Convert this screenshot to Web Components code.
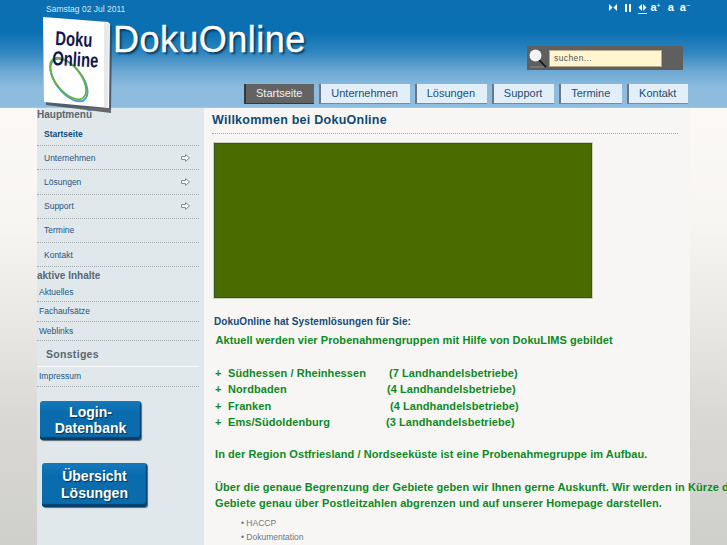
<!DOCTYPE html>
<html lang="de">
<head>
<meta charset="utf-8">
<title>DokuOnline</title>
<style>
html { overflow: hidden; height: 100%; }
body {
    margin: 0;
    height: 545px;
    overflow: hidden;
    font-family: "Liberation Sans", Arial, sans-serif;
    background: linear-gradient(#fbf8f5 108px, #f8f6f3 220px, #e9e8e4 320px, #d9d8d4 420px, #cfcfcb 545px);
}
</style>
</head>
<body>
<doku-header date="Samstag 02 Jul 2011" brand="DokuOnline">
    <doku-tab active>Startseite</doku-tab>
    <doku-tab>Unternehmen</doku-tab>
    <doku-tab>Lösungen</doku-tab>
    <doku-tab>Support</doku-tab>
    <doku-tab>Termine</doku-tab>
    <doku-tab>Kontakt</doku-tab>
</doku-header>
<doku-page>
    <doku-sidebar slot="side">
        <side-title>Hauptmenü</side-title>
        <side-item size="big" current>Startseite</side-item>
        <side-item size="big" more>Unternehmen</side-item>
        <side-item size="big" more>Lösungen</side-item>
        <side-item size="big" more>Support</side-item>
        <side-item size="big">Termine</side-item>
        <side-item size="big">Kontakt</side-item>
        <side-title second>aktive Inhalte</side-title>
        <side-item>Aktuelles</side-item>
        <side-item>Fachaufsätze</side-item>
        <side-item>Weblinks</side-item>
        <side-title sub>Sonstiges</side-title>
        <side-item>Impressum</side-item>
        <doku-button style="margin: 14px 0 0 3px; width: 101px; height: 39px;">Login-<br>Datenbank</doku-button>
        <doku-button style="margin: 23px 0 0 5px; width: 105px; height: 44px;">Übersicht<br>Lösungen</doku-button>
    </doku-sidebar>
    <doku-content title="Willkommen bei DokuOnline">
        <p class="intro">DokuOnline hat Systemlösungen für Sie:</p>
        <p class="lead">Aktuell werden vier Probenahmengruppen mit Hilfe von DokuLIMS gebildet</p>
        <div class="regions">
            <region-row name="Südhessen / Rheinhessen" gap="161">(7 Landhandelsbetriebe)</region-row>
            <region-row name="Nordbaden" gap="159">(4 Landhandelsbetriebe)</region-row>
            <region-row name="Franken" gap="162">(4 Landhandelsbetriebe)</region-row>
            <region-row name="Ems/Südoldenburg" gap="158">(3 Landhandelsbetriebe)</region-row>
        </div>
        <p class="para">In der Region Ostfriesland / Nordseeküste ist eine Probenahmegruppe im Aufbau.</p>
        <p class="para wide">Über die genaue Begrenzung der Gebiete geben wir Ihnen gerne Auskunft. Wir werden in Kürze die<br>Gebiete genau über Postleitzahlen abgrenzen und auf unserer Homepage darstellen.</p>
        <ul>
            <li>HACCP</li>
            <li>Dokumentation</li>
        </ul>
    </doku-content>
</doku-page>

<script>
// Kopfbereich mit Logo, Suche und Reitern
class DokuHeader extends HTMLElement {
    constructor() {
        super();
        this.attachShadow({ mode: "open" });
        this.shadowRoot.innerHTML = `
            <style>
                :host {
                    display: block;
                    position: relative;
                    height: 108px;
                    box-sizing: border-box;
                    padding: 3px 37px 0 46px;
                    background: linear-gradient(#0c6fb1 0, #0a70b2 32px, #2f85bf 52px, #6fa9d3 72px, #8dbcde 88px, #8dbcde 107px, #a9c9c8 107px);
                    color: #fff;
                }
                .top { display: flex; justify-content: space-between; height: 23px; }
                .date { font-size: 8.5px; color: #d5e6f3; line-height: 11px; padding-top: 1px; }
                .brandrow { display: flex; justify-content: space-between; align-items: flex-start; padding-left: 67px; }
                .brand {
                    font-size: 36px;
                    line-height: 28px;
                    text-shadow: 2px 2px 2px #053a5e;
                    letter-spacing: 0.45px;
                    height: 28px;
                    -webkit-text-stroke: 0.3px #fff;
                }
                doku-search { margin: 20px 7px 0 0; width: 156px; }
                nav { display: flex; gap: 5px; position: absolute; left: 244px; top: 84px; }
                svg.logo { position: absolute; left: 38px; top: 12px; }
            </style>
            <svg class="logo" width="78" height="102" viewBox="0 0 78 102">
                <polygon points="6,6 73,12 72,99 7,91" fill="#3a3f44" opacity=".75" transform="translate(1 2)"/>
                <polygon points="5,5 70,10 72,12 71,96 6,90" fill="#fff"/>
                <polygon points="66,10 71,12 70,96 66,95" fill="#e6e9eb"/>
                <ellipse cx="31" cy="68" rx="13" ry="25" transform="rotate(-38 31 68)" fill="none" stroke="#4a9bd8" stroke-width="2"/>
                <ellipse cx="30" cy="66.5" rx="12.5" ry="24.5" transform="rotate(-38 30 66.5)" fill="none" stroke="#66b32e" stroke-width="1.6"/>
                <text x="17" y="33" font-family="Liberation Sans" font-weight="700" font-size="20" fill="#12164e" transform="rotate(3 17 33)" textLength="37" lengthAdjust="spacingAndGlyphs">Doku</text>
                <text x="14" y="53" font-family="Liberation Sans" font-weight="700" font-size="20" fill="#12164e" transform="rotate(3 14 53)" textLength="46" lengthAdjust="spacingAndGlyphs">Online</text>
            </svg>
            <div class="top">
                <span class="date"></span>
                <doku-tools></doku-tools>
            </div>
            <div class="brandrow">
                <span class="brand"></span>
                <doku-search></doku-search>
            </div>
            <nav><slot></slot></nav>
        `;
    }

    connectedCallback() {
        this.shadowRoot.querySelector(".date").textContent = this.getAttribute("date");
        this.shadowRoot.querySelector(".brand").textContent = this.getAttribute("brand");
    }
}

// Symbole oben rechts (Layout und Schriftgroesse)
class DokuTools extends HTMLElement {
    constructor() {
        super();
        this.attachShadow({ mode: "open" });
        this.shadowRoot.innerHTML = `
            <style>
                :host { display: flex; align-items: flex-start; color: #fff; font: 700 11px "Liberation Sans", sans-serif; }
                svg { display: block; margin-top: 1px; }
                span { line-height: 9px; display: block; }
                sup { font-size: 7px; line-height: 0; vertical-align: 3px; font-weight: 400; }
            </style>
            <svg width="8" height="7" viewBox="0 0 8 7" fill="#fff"><polygon points="0,0 3.5,3.5 0,7"/><polygon points="8,0 4.5,3.5 8,7"/></svg>
            <svg width="6" height="8" viewBox="0 0 6 8" fill="#fff" style="margin-left:8px"><rect width="2" height="8"/><rect x="4" width="2" height="8"/></svg>
            <svg width="9" height="10" viewBox="0 0 9 10" fill="#fff" style="margin-left:7px"><polygon points="4,0 0.5,3.5 4,7"/><polygon points="5,0 8.5,3.5 5,7"/><rect y="9" width="9" height="1"/></svg>
            <span style="margin-left:3px">a<sup>+</sup></span>
            <span style="margin-left:7px">a</span>
            <span style="margin-left:6px">a<sup>−</sup></span>
        `;
    }
}

// Suchfeld mit Lupe
class DokuSearch extends HTMLElement {
    constructor() {
        super();
        this.attachShadow({ mode: "open" });
        this.shadowRoot.innerHTML = `
            <style>
                :host {
                    display: flex;
                    align-items: center;
                    gap: 2px;
                    height: 24px;
                    box-sizing: border-box;
                    padding: 0 21px 0 2px;
                    background: #5f5f5f;
                }
                .field {
                    flex: 1;
                    height: 17px;
                    box-sizing: border-box;
                    border: 1px solid #b3ab8c;
                    background: #fff6cf;
                    color: #555;
                    font-size: 8.5px;
                    line-height: 15px;
                    letter-spacing: 0.4px;
                    padding-left: 4px;
                }
            </style>
            <svg width="18" height="20" viewBox="0 0 18 20">
                <line x1="10" y1="12" x2="17" y2="19" stroke="#111" stroke-width="1.6"/>
                <line x1="1" y1="19" x2="15" y2="19" stroke="#8a8a8a" stroke-width="1"/>
                <circle cx="6.5" cy="7.5" r="6" fill="#f2f2f2"/>
            </svg>
            <div class="field">suchen...</div>
        `;
    }
}

// Reiter der Hauptnavigation
class DokuTab extends HTMLElement {
    constructor() {
        super();
        this.attachShadow({ mode: "open" });
        this.shadowRoot.innerHTML = `
            <style>
                :host {
                    display: block;
                    height: 20px;
                    box-sizing: border-box;
                    padding: 0 11.8px 0 10px;
                    background: #e2eff8;
                    border-left: 2px solid #6b7680;
                    border-bottom: 1px solid #7c8a96;
                    color: #1b4d74;
                    font-size: 11px;
                    line-height: 18px;
                }
                :host([active]) {
                    background: #636363;
                    color: #f2f2f2;
                    border-left-color: #2c3a46;
                    border-bottom-color: #2c3a46;
                }
            </style>
            <slot></slot>
        `;
    }
}

// Seitenkoerper: Seitenleiste und Inhalt
class DokuPage extends HTMLElement {
    constructor() {
        super();
        this.attachShadow({ mode: "open" });
        this.shadowRoot.innerHTML = `
            <style>
                :host {
                    display: grid;
                    grid-template-columns: 167px 486px;
                    margin-left: 37px;
                    height: 437px;
                }
            </style>
            <slot name="side"></slot>
            <slot></slot>
        `;
    }
}

class DokuSidebar extends HTMLElement {
    constructor() {
        super();
        this.attachShadow({ mode: "open" });
        this.shadowRoot.innerHTML = `
            <style>
                :host { display: block; background: #e1e8ec; height: 437px; padding-right: 5px; box-sizing: border-box; }
            </style>
            <slot></slot>
        `;
    }
}

class SideTitle extends HTMLElement {
    constructor() {
        super();
        this.attachShadow({ mode: "open" });
        this.shadowRoot.innerHTML = `
            <style>
                :host {
                    display: block;
                    height: 14px;
                    color: #596773;
                    font-size: 10px;
                    font-weight: 700;
                    line-height: 14px;
                }
                :host([second]) { height: 15.5px; line-height: 17px; }
                :host([sub]) {
                    height: 26px;
                    line-height: 26px;
                    padding-left: 9px;
                    font-size: 10.5px;
                    letter-spacing: 0.3px;
                    box-sizing: border-box;
                    border-bottom: 1px solid #f8fafb;
                }
            </style>
            <slot></slot>
        `;
    }
}

class SideItem extends HTMLElement {
    constructor() {
        super();
        this.attachShadow({ mode: "open" });
        this.shadowRoot.innerHTML = `
            <style>
                :host {
                    display: flex;
                    justify-content: space-between;
                    align-items: center;
                    height: 19.5px;
                    box-sizing: border-box;
                    padding: 0 9px 0 2px;
                    border-bottom: 1px dotted #a5acb0;
                    color: #1f5580;
                    font-size: 8.5px;
                }
                :host([size="big"]) { height: 24.2px; padding-left: 7px; }
                :host([current]) { font-weight: 700; color: #0f4a76; }
                svg { display: none; }
                :host([more]) svg { display: block; }
            </style>
            <span><slot></slot></span>
            <svg width="9" height="8" viewBox="0 0 9 8">
                <path d="M0.5 2.5H4.5V0.5L8.5 4L4.5 7.5V5.5H0.5Z" fill="#f4f6f7" stroke="#8a9096" stroke-width="1"/>
            </svg>
        `;
    }
}

class DokuButton extends HTMLElement {
    constructor() {
        super();
        this.attachShadow({ mode: "open" });
        this.shadowRoot.innerHTML = `
            <style>
                :host {
                    display: flex;
                    align-items: center;
                    justify-content: center;
                    box-sizing: border-box;
                    text-align: center;
                    background: linear-gradient(#1478bb, #0a6cad 30%);
                    border-radius: 3px;
                    box-shadow: inset -1px -3px 1px #06406a, 1px 1px 1px #5a6770;
                    color: #fff;
                    font-size: 14px;
                    font-weight: 700;
                    line-height: 16.5px;
                    text-shadow: 1px 1px 1px #043353;
                }
            </style>
            <span><slot></slot></span>
        `;
    }
}

// Eine Zeile der Gebietsliste, Spalte fuer die Anzahl per Attribut
class RegionRow extends HTMLElement {
    constructor() {
        super();
        this.attachShadow({ mode: "open" });
        this.shadowRoot.innerHTML = `
            <style>
                :host { display: flex; white-space: nowrap; }
                .plus { width: 13px; }
            </style>
            <span class="plus">+</span>
            <span class="name"></span>
            <slot></slot>
        `;
    }

    connectedCallback() {
        const name = this.shadowRoot.querySelector(".name");
        name.textContent = this.getAttribute("name");
        name.style.width = this.getAttribute("gap") + "px";
    }
}

// Inhaltsbereich: die Absaetze kommen per Slot, ihr Stil steht im Shadow DOM
class DokuContent extends HTMLElement {
    constructor() {
        super();
        this.attachShadow({ mode: "open" });
        this.shadowRoot.innerHTML = `
            <style>
                :host {
                    display: block;
                    background: #f7f6f5;
                    height: 437px;
                    padding: 5px 12px 0 8px;
                    box-sizing: border-box;
                }
                h1 {
                    margin: 0;
                    height: 21px;
                    box-sizing: border-box;
                    font-size: 12.5px;
                    line-height: 15px;
                    letter-spacing: 0.25px;
                    color: #0f4a73;
                    border-bottom: 1px dotted #a8a8a8;
                }
                .green {
                    width: 378px;
                    height: 155px;
                    margin: 9px 0 0 2px;
                    box-sizing: border-box;
                    background: #4a6b00;
                    border: 1px solid #2f5a2a;
                    outline: 1px solid #c8d2bc;
                }
                .flow { width: 520px; }
                ::slotted(.intro) {
                    margin: 16.5px 0 0 2px;
                    color: #144b74;
                    font-size: 10px;
                    font-weight: 700;
                    letter-spacing: 0.08px;
                    line-height: 13px;
                }
                ::slotted(.lead) {
                    margin: 4.5px 0 0 3.5px;
                    color: #0d8a1e;
                    font-size: 11px;
                    font-weight: 700;
                    letter-spacing: 0.07px;
                    line-height: 16px;
                }
                ::slotted(.regions) {
                    margin: 17px 0 0 3px;
                    color: #0d8a1e;
                    font-size: 11px;
                    font-weight: 700;
                    letter-spacing: 0.07px;
                    line-height: 16.4px;
                }
                ::slotted(.para) {
                    margin: 15px 0 0 3px;
                    color: #0d8a1e;
                    font-size: 11px;
                    font-weight: 700;
                    letter-spacing: 0.07px;
                    line-height: 16.4px;
                    white-space: nowrap;
                }
                ::slotted(.wide) { margin-top: 16.6px; }
                ::slotted(ul) {
                    margin: 5.6px 0 0 29px;
                    padding: 0;
                    list-style: "• " inside;
                    color: #6f767c;
                    font-size: 8.5px;
                    line-height: 13.5px;
                }
            </style>
            <h1></h1>
            <div class="green"></div>
            <div class="flow"><slot></slot></div>
        `;
    }

    connectedCallback() {
        this.shadowRoot.querySelector("h1").textContent = this.getAttribute("title");
    }
}

customElements.define("doku-header", DokuHeader);
customElements.define("doku-tools", DokuTools);
customElements.define("doku-search", DokuSearch);
customElements.define("doku-tab", DokuTab);
customElements.define("doku-page", DokuPage);
customElements.define("doku-sidebar", DokuSidebar);
customElements.define("side-title", SideTitle);
customElements.define("side-item", SideItem);
customElements.define("doku-button", DokuButton);
customElements.define("region-row", RegionRow);
customElements.define("doku-content", DokuContent);
</script>
</body>
</html>
